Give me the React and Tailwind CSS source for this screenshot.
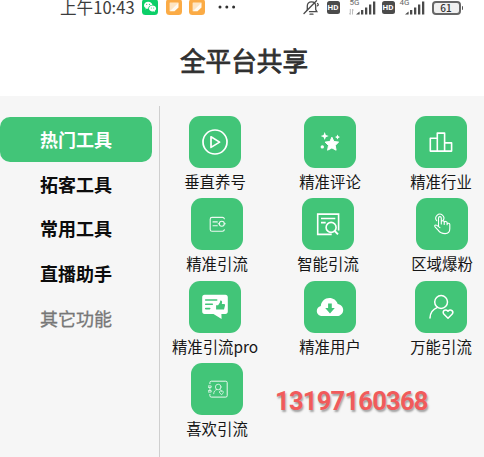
import React, { useState } from 'react';

const menu = ['热门工具', '拓客工具', '常用工具', '直播助手', '其它功能'];

const PlayIcon = () => (
  <svg width="52" height="52" viewBox="0 0 52 52" fill="none" stroke="white" strokeWidth="1.7" strokeLinejoin="round">
    <circle cx="26" cy="26" r="12" />
    <path d="M22 20.8v10.6l8.6-5.3z" />
  </svg>
);

const StarsIcon = () => (
  <svg width="52" height="52" viewBox="0 0 52 52" fill="white">
    <path stroke="white" strokeLinejoin="round" d="M27.9 21.2l2 4.3 4.7.6-3.4 3.3.9 4.8-4.2-2.3-4.3 2.3.9-4.8-3.4-3.3 4.8-.6z" />
    <path d="M20.7 16.1l1.1 2.9 2.9 1.1-2.9 1.1-1.1 2.9-1.1-2.9-2.9-1.1 2.9-1.1z" />
    <path d="M33.5 18.6l.8 1.7 1.7.8-1.7.8-.8 1.7-.8-1.7-1.7-.8 1.7-.8z" />
    <circle cx="18.3" cy="30.9" r="1.7" />
  </svg>
);

const BarsIcon = () => (
  <svg width="52" height="52" viewBox="0 0 52 52" fill="none" stroke="white" strokeWidth="1.6" strokeLinejoin="round">
    <path d="M15.3 22.3h7v12.8h-7zM22.3 17.1h7.3v18h-7.3zM29.6 26.9h7v8.2h-7z" />
  </svg>
);

const CardIcon = () => (
  <svg width="52" height="52" viewBox="0 0 52 52" fill="none" stroke="white" strokeWidth="1.1" strokeLinecap="round" opacity=".9">
    <path d="M33.4 20.8c-.3-1-.9-1.4-1.9-1.4H21c-1.2 0-1.8.7-1.8 1.8v10.2c0 1.2.6 1.9 1.8 1.9h10.5c1.1 0 1.7-.5 1.9-1.6" />
    <path d="M22 23.9h4.3M22 27.8h4.3" />
    <circle cx="30.8" cy="25.8" r="2.5" />
    <path d="M27.2 25.8h1M33.3 25.8h1" />
  </svg>
);

const SearchPageIcon = () => (
  <svg width="52" height="52" viewBox="0 0 52 52" fill="none" stroke="white" strokeWidth="1.6">
    <path d="M36.6 32.5V16.1H15.7v20.3h14" />
    <path d="M19 20.5h14.3M19 24.6h4.7" />
    <circle cx="29.1" cy="29.4" r="5" />
    <path d="M32.7 33l3.3 3.4" strokeWidth="1.9" />
  </svg>
);

const TapIcon = () => (
  <svg width="52" height="52" viewBox="0 0 52 52" fill="none" stroke="white" strokeWidth="1.1" strokeLinecap="round" strokeLinejoin="round">
    <path d="M20.7 22.7a4 4 0 1 1 6.4-.2" />
    <path d="M22.5 28.2v-8.1c0-2 2.8-2 2.8 0v5.1M25.3 26v-2.2c0-1.5 2.9-1.4 2.9.2v2.5M28.2 26v-1.7c.2-1.4 2.900-1.100 2.900.5v2M31.100 26c.3-1.200 2.700-.9 2.700.6v4.200c0 2.900-1.900 4.800-4.700 4.800-3.800 0-5.300-1.100-7-3.500l-2.800-3c-1.500-1.700.3-2.700 1.600-1.700l3 2.200" />
  </svg>
);

const CommentLikeIcon = () => (
  <svg width="52" height="52" viewBox="0 0 52 52">
    <path fill="white" d="M15.6 13.8h20.8c1.5 0 2.4 1 2.4 2.4v14.3c0 1.6-.9 2.5-2.4 2.5h-4l.2 5.1-8.1-5.1h-8.900c-1.600 0-2.400-.9-2.400-2.500V16.200c0-1.400.8-2.400 2.400-2.400z" />
    <path stroke="#42c578" strokeWidth="1.6" strokeLinecap="round" d="M16.7 19h11M16.7 23.3h6.6M16.7 27.6h4" />
    <path fill="#42c578" d="M27.1 24.2h2l1.8-2.6.4-2c1.7-.3 2.3 1.2 1.5 3.4h2c1 0 1.4.7 1.2 1.6l-1 3.9h-7.9z" />
  </svg>
);

const CloudIcon = () => (
  <svg width="52" height="52" viewBox="0 0 52 52">
    <path fill="white" d="M18 35c-3 0-5.2-2.3-5.2-5 0-2.5 1.6-4.4 4-4.9.4-4.7 4.1-8 8.6-8 3.9 0 7.1 2.3 8.3 5.8 3.1.5 5.5 2.9 5.5 6 0 3.5-2.8 6.1-6.3 6.1z" />
    <path fill="#42c578" d="M24.1 22.5h3.7v4.6h3L26 32.4l-4.8-5.3h2.9z" />
  </svg>
);

const UserHeartIcon = () => (
  <svg width="52" height="52" viewBox="0 0 52 52" fill="none" stroke="white" strokeWidth="1.5" strokeLinecap="round" strokeLinejoin="round">
    <circle cx="26.1" cy="21" r="6.4" />
    <path d="M22.5 26.4c-4.5 1.8-7.4 5.7-7.5 10.7" />
    <path d="M33 37.2l-4-3.9c-2.4-2.6.9-6.1 4-3.2 3-2.9 6.3.6 4 3.2z" />
  </svg>
);

const ContactCardIcon = () => (
  <svg width="52" height="52" viewBox="0 0 52 52" fill="none" stroke="white" strokeWidth="1" strokeLinecap="round" strokeLinejoin="round" opacity=".9">
    <path d="M18.9 20.7v-1.1c0-.9.5-1.4 1.4-1.4h14.5c.9 0 1.4.5 1.4 1.4v13.1c0 .9-.5 1.4-1.4 1.4H20.3c-.9 0-1.4-.5-1.4-1.4v-1.3" />
    <path d="M17.5 22.9h2.7v1.5h-2.7zM17.5 27.6h2.7v1.5h-2.7zM18.9 24.4v3.2" strokeWidth=".8" />
    <circle cx="27.2" cy="24" r="2.8" strokeWidth=".8" />
    <path d="M25.7 26.5c-1.9.6-2.9 2.1-3 4.2M28.6 26.3l2 1.4M30.4 31.5l-1.7-1.6c-1-1.3.5-2.6 1.7-1.4 1.2-1.2 2.7.1 1.7 1.4z" strokeWidth=".8" />
  </svg>
);

const rows = [
  [
    { label: '垂直养号', icon: PlayIcon },
    { label: '精准评论', icon: StarsIcon },
    { label: '精准行业', icon: BarsIcon },
  ],
  [
    { label: '精准引流', icon: CardIcon },
    { label: '智能引流', icon: SearchPageIcon },
    { label: '区域爆粉', icon: TapIcon },
  ],
  [
    { label: '精准引流pro', icon: CommentLikeIcon },
    { label: '精准用户', icon: CloudIcon },
    { label: '万能引流', icon: UserHeartIcon },
  ],
];

const Tool = ({ label, icon: Icon }) => (
  <div className="flex flex-col items-center">
    <div className="size-[52px] rounded-[11px] bg-[#42c578]">
      <Icon />
    </div>
    <span className="mt-[3px] text-[15.4px] leading-[20px] whitespace-nowrap text-[#161616]">{label}</span>
  </div>
);

const Signal = () => (
  <svg width="20" height="14" viewBox="0 0 20 14" fill="#4a4a4a">
    <path d="M0 13.5l3.6-3v3zM5 9h2.3v4.5H5zM9 6.5h2.3v7H9zM13 3.5h2.3v10H13zM17 .5h2.3v13H17z" />
  </svg>
);

const Hd = () => (
  <span className="flex h-[13px] w-[13px] items-center justify-center rounded-[2.5px] bg-[#4b4b4b] font-['Roboto',sans-serif] text-[8px] leading-none font-bold text-white">HD</span>
);

const Note = () => (
  <svg width="16" height="16" viewBox="0 0 16 16">
    <rect width="16" height="16" rx="3.5" fill="#fbab45" />
    <path fill="#fffaf0" d="M3.8 3.8h8.7v4.7l-4 3.7H3.8z" />
    <path fill="#fee5c2" d="M12.5 3.8L3.8 12.2V3.8z" />
  </svg>
);

const StatusBar = () => (
  <div className="flex h-[15px] items-end justify-between pr-[21px] pl-[60px]">
    <div className="flex h-4 items-center">
      <span className="w-[75px] text-[16.6px] leading-4 whitespace-nowrap text-[#3c3c3c]">上午10:43</span>
      <svg className="ml-[7px]" width="16" height="16" viewBox="0 0 16 16">
        <rect width="16" height="16" rx="3.5" fill="#0bcf68" />
        <path fill="white" d="M6.2 2.8c2.3 0 4 1.4 4.2 3.2-2.5 0-4.3 1.5-4.2 3.8-.5 0-.9 0-1.4-.2l-1.4.8.4-1.3C2.6 8.4 2 7.4 2 6.4c0-2 1.8-3.6 4.2-3.6z" />
        <path fill="white" d="M10.5 6.6c2 0 3.6 1.3 3.6 3 0 .9-.5 1.7-1.3 2.2l.3 1.1-1.2-.6c-.5.1-.9.2-1.4.2-2 0-3.5-1.3-3.5-2.9 0-1.7 1.5-3 3.5-3z" />
        <g fill="#0bcf68">
          <circle cx="4.7" cy="5.3" r=".6" />
          <circle cx="7.5" cy="5.3" r=".6" />
          <circle cx="9.3" cy="8.9" r=".5" />
          <circle cx="11.7" cy="8.9" r=".5" />
        </g>
      </svg>
      <div className="ml-2 flex gap-[7px]">
        <Note />
        <Note />
      </div>
      <svg className="ml-[13px]" width="18" height="4" viewBox="0 0 18 4" fill="#303030">
        <circle cx="2" cy="2" r="1.5" />
        <circle cx="8.8" cy="2" r="1.5" />
        <circle cx="15.6" cy="2" r="1.5" />
      </svg>
    </div>

    <div className="flex h-[15px] items-center">
      <svg width="17" height="16" viewBox="0 0 17 16" fill="none" stroke="#4a4a4a" strokeWidth="1.3" strokeLinecap="round">
        <path d="M3.3 11.2l1-1.7V6c0-2.5 1.7-4.2 4.2-4.2s4.2 1.7 4.2 4.2v3.5l1.2 2.2H6.5M7 14.2h3M1 13.5L13.5.8M14.5 3.5c1 .6 1 1.7 0 2.3" />
      </svg>
      <div className="ml-[7px]"><Hd /></div>
      <div className="relative ml-[9px] flex h-[14px] w-[27px] justify-end">
        <span className="absolute -top-[2px] left-px font-['Roboto',sans-serif] text-[8px] leading-[8px] text-[#666]">5G</span>
        <svg className="absolute top-[8px] left-0" width="5" height="6" viewBox="0 0 5 6" stroke="#aaa" strokeWidth=".8" fill="none">
          <path d="M1.3 0v5.5L.2 4.5M3.5 5.5V.2l1.2 1" />
        </svg>
        <Signal />
      </div>
      <div className="ml-[6px]"><Hd /></div>
      <div className="relative ml-[5px] flex h-[14px] w-[25px] justify-end">
        <span className="absolute -top-[2px] left-0 font-['Roboto',sans-serif] text-[8px] leading-[8px] text-[#666]">4G</span>
        <Signal />
      </div>
      <div className="ml-[7px] flex h-[14px] w-[29px] items-center justify-center rounded-[4px] border-2 border-[#666] bg-[#f0f0f0] text-[10px] leading-none font-medium text-[#333]">61</div>
      <div className="ml-px h-1 w-[1.5px] rounded-r bg-[#555]" />
    </div>
  </div>
);

export default function App() {
  const [active, setActive] = useState(0);

  return (
    <div className="flex h-[457px] w-[484px] flex-col overflow-hidden bg-white font-['Noto_Sans_CJK_SC',sans-serif]">
      <StatusBar />
      <header className="flex h-[81px] items-center justify-center pt-[9px] pl-[4px]">
        <h1 className="text-[25.6px] leading-8 text-[#303030] [-webkit-text-stroke:0.8px_#303030]">全平台共享</h1>
      </header>

      <main className="flex flex-1 bg-[#f6f6f6]">
        {/* Category menu */}
        <nav className="flex w-[152px] shrink-0 flex-col pt-[21px]">
          {menu.map((item, i) => (
            <button
              key={item}
              onClick={() => setActive(i)}
              className={`h-[44.7px] shrink-0 rounded-[10px] pb-px text-[18px] leading-6 ${
                i === active
                  ? 'bg-[#42c578] font-bold text-white'
                  : i === 4
                    ? 'text-[#777] [-webkit-text-stroke:0.3px_#777]'
                    : 'font-bold text-[#0c0c0c]'
              }`}
            >
              {item}
            </button>
          ))}
        </nav>
        <div className="mt-[10px] ml-[7px] w-px shrink-0 bg-[#cfcfcf]" />

        {/* Tools */}
        <section className="flex w-[324px] shrink-0 flex-col pt-5">
          {rows.map((row, i) => (
            <div
              key={i}
              className={`grid h-[82.3px] ${i === 1 ? 'grid-cols-[114px_108px_120px]' : 'grid-cols-[110px_120px_102px]'}`}
            >
              {row.map((tool) => (
                <Tool key={tool.label} {...tool} />
              ))}
            </div>
          ))}
          <div className="flex">
            <div className="w-[114px]">
              <Tool label="喜欢引流" icon={ContactCardIcon} />
            </div>
            <p className="pt-[22px] pl-[1px] font-['Roboto',sans-serif] text-[25.5px] leading-8 font-bold tracking-[-0.75px] text-[#f15b5b] [text-shadow:1px_2px_2px_rgba(0,0,0,0.35)]">
              13197160368
            </p>
          </div>
        </section>
      </main>
    </div>
  );
}
